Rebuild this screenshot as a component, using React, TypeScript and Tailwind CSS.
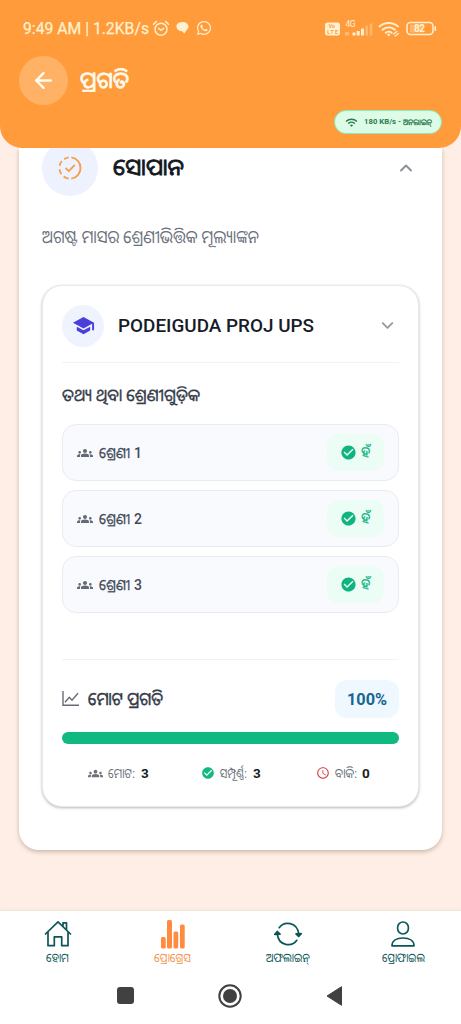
import React from 'react';
import { MdGroups, MdSchool, MdCheckCircle, MdSchedule, MdWifi } from 'react-icons/md';
import { FaWhatsapp } from 'react-icons/fa';
import { ArrowLeft, ChevronDown, ChevronUp } from 'lucide-react';

function Fit({ w, size, children, className = '' }: { w: number; size: number; children: string; className?: string }) {
  return (
    <svg width={w} height={size * 2} className={`shrink-0 overflow-visible ${className}`} fill="currentColor">
      <text x="0" y={size * 1.34} fontSize={size} textLength={w} lengthAdjust="spacingAndGlyphs">
        {children}
      </text>
    </svg>
  );
}

function AlarmIcon() {
  return (
    <svg width="18" height="17" viewBox="0 0 18 17" fill="none" stroke="currentColor" strokeWidth="1.5" strokeLinecap="round">
      <circle cx="9" cy="9.3" r="6" />
      <path d="M6.5 8.3 9 10.3l2.7-2M1.5 4.2 4.3 1.6M16.5 4.2l-2.8-2.6" />
    </svg>
  );
}

function StatusBar() {
  return (
    <div className="flex h-[18px] items-center pl-[23px] pr-[20px] text-[#fff1cf]">
      <Fit w={126} size={16} className="mt-[2px] stroke-current stroke-[.25]">9:49 AM | 1.2KB/s</Fit>
      <span className="ml-[3px]"><AlarmIcon /></span>
      <svg className="ml-[6px]" width="13" height="12" viewBox="0 0 13 12" fill="currentColor">
        <path d="M3 .8C5-.2 9-.2 11 1.500c2 1.700 2 4.500 0 6L8.300 11.500 6 9.200C3 9.500.5 7 .5 4.500.3 2.500 1.500 1.300 3 .8Z" />
      </svg>
      <FaWhatsapp className="ml-[7px] size-[16px]" />
      <svg className="-mt-[1px] ml-auto" width="116" height="22" viewBox="0 0 116 22" fill="currentColor">
        <rect x="0" y="5.500" width="15" height="13" rx="2.500" />
        <text x="3.800" y="11.200" fontSize="5" fontWeight="700" fill="#ff9a3c">Vo</text>
        <text x="2.200" y="17" fontSize="5" fontWeight="700" fill="#ff9a3c" textLength="10.500">LTE</text>
        <text x="20.500" y="9.500" fontSize="8.500" textLength="10">4G</text>
        <rect x="20" y="15" width="4" height="3.500" opacity=".35" />
        <rect x="27.500" y="15.500" width="3" height="3" rx=".6" />
        <rect x="31.700" y="14" width="3" height="4.500" rx=".6" />
        <rect x="36" y="11.500" width="3" height="7" rx=".6" />
        <rect x="40.500" y="8.500" width="2.500" height="10" opacity=".35" />
        <rect x="44.800" y="6.500" width="2.500" height="12" opacity=".35" />
        <g fill="none" stroke="currentColor" strokeWidth="1.900" strokeLinecap="round">
          <path d="M54.500 9.500c5.500-4.700 13-4.700 18.500 0M57.500 12.800c3.700-3 8.700-3 12.400 0M60.700 15.800c2-1.500 4.200-1.500 6 0" />
          <path d="m68.500 17 3.500-2.500m-2 4.500 3.500-2.500" strokeWidth="1.200" />
        </g>
        <circle cx="63.700" cy="17.800" r="1.400" />
        <rect x="82" y="5.500" width="26" height="12" rx="3.500" fill="none" stroke="currentColor" strokeWidth="1.500" />
        <rect x="85" y="7.500" width="13" height="8" opacity=".3" />
        <rect x="109.500" y="9" width="1.600" height="5" rx=".8" />
        <text x="89" y="15.200" fontSize="10" fontWeight="700" textLength="11">82</text>
      </svg>
    </div>
  );
}

function LineChartIcon() {
  return (
    <svg width="17" height="16" viewBox="0 0 17 16" fill="none" stroke="#666c76" strokeWidth="1.400">
      <path d="M1 0v14.300h16M3 11.300l4.300-5 2.700 3 6-7" />
    </svg>
  );
}

function ProgressCheck() {
  return (
    <svg width="26" height="26" viewBox="0 0 26 26" fill="none" stroke="#f5a04c" strokeWidth="1.900">
      <path d="M14.300 2.400a10.700 10.700 0 0 1 0 21.200" />
      <path d="M11.700 2.400a10.700 10.700 0 0 0-4.600 1.700M4.900 6A10.700 10.700 0 0 0 2.600 10.700M2.500 14.300a10.700 10.700 0 0 0 2 5M6.600 21.400a10.700 10.700 0 0 0 5.100 2.200" />
      <path d="m8.500 12.800 3.300 3.300 6-6.300" />
    </svg>
  );
}

function ClassRow({ n }: { n: number }) {
  return (
    <div className="flex h-[57px] items-center rounded-[14px] border-[1.500px] border-[#e8ebf0] bg-[#f8fafd] pl-[14px] pr-[14px]">
      <MdGroups className="size-[16px] text-[#646a75]" />
      <Fit w={31} size={15} className="ml-[6px] stroke-current stroke-[.3] text-[#434a57]">ଶ୍ରେଣୀ</Fit>
      <span className="ml-[4px] mt-[1px] text-[14px] font-medium leading-none text-[#434a57]">{n}</span>
      <div className="ml-auto flex h-[37px] w-[57px] items-center rounded-xl bg-[#ecfdf5] pl-[13px] text-[#10b47f]">
        <MdCheckCircle className="size-[17px]" />
        <Fit w={9} size={14.5} className="ml-[4px] stroke-current stroke-[.3]">ହଁ</Fit>
      </div>
    </div>
  );
}

function Home() {
  return (
    <svg width="28" height="28" viewBox="0 0 28 28" fill="none" stroke="currentColor" strokeWidth="1.700" strokeLinejoin="round" strokeLinecap="round">
      <path d="M1.500 14 14 1.800 26.500 14M4 12v13.700h6.300v-8.800h7.400v8.800H24V12M19 6.200V2.800h3.500v6.800" />
    </svg>
  );
}
function Bars() {
  return (
    <svg width="26" height="29" viewBox="0 0 26 29" fill="#ff8c3e">
      <rect x="1" y="17" width="4.700" height="11.500" rx="1.500" />
      <rect x="7" y="0" width="5" height="28.500" rx="1.500" />
      <rect x="13.500" y="11.500" width="4.700" height="17" rx="1.500" />
      <rect x="20" y="4.500" width="4.700" height="24" rx="1.500" />
    </svg>
  );
}
function Sync() {
  return (
    <svg width="28" height="24" viewBox="0 0 28 24" fill="none" stroke="currentColor" strokeWidth="1.700" strokeLinecap="round" strokeLinejoin="round">
      <path d="M5.200 5.700C10-1.200 23.500-.3 24.700 12.200M22.800 18.300C18 25.200 4.500 24.300 3.300 11.800" />
      <path d="m22 11.800 2.700 2.700 2.500-2.800Z M.800 12.300l2.500-2.800 2.700 2.700Z" fill="currentColor" />
    </svg>
  );
}
function Person() {
  return (
    <svg width="24" height="26" viewBox="0 0 24 26" fill="none" stroke="currentColor" strokeWidth="1.700" strokeLinejoin="round">
      <rect x="6.600" y="1" width="10.800" height="12" rx="5.400" />
      <path d="M1 24.800c0-4.700 4-7.800 11-7.800s11 3.100 11 7.800Z" />
    </svg>
  );
}

const tabs = [
  { label: 'ହୋମ', w: 23, icon: <Home />, color: 'text-[#0c5657]' },
  { label: 'ପ୍ରୋଗ୍ରେସ', w: 37, icon: <Bars />, color: 'text-[#f3934f]' },
  { label: 'ଅଫଲାଇନ୍', w: 44, icon: <Sync />, color: 'text-[#0c5657]' },
  { label: 'ପ୍ରୋଫାଇଲ', w: 43, icon: <Person />, color: 'text-[#0c5657]' },
];

export default function App() {
  return (
    <div className="flex h-[1024px] w-[461px] flex-col overflow-hidden bg-[#feeee5] font-[Roboto,'Noto_Sans_Oriya','Noto_Sans',sans-serif]">
      <header className="z-10 flex h-[148px] shrink-0 flex-col rounded-b-[22px] bg-[#ff9b3b] pt-[19px]">
        <StatusBar />
        <div className="mt-[19px] flex h-[49px] items-center pl-[19px] text-[#fffbed]">
          <div className="flex size-[49px] items-center justify-center rounded-full bg-[#ffb266]">
            <ArrowLeft className="size-[25px]" strokeWidth={2.3} />
          </div>
          <Fit w={49} size={23} className="-mt-[2px] ml-[12px] stroke-current stroke-[.8]">ପ୍ରଗତି</Fit>
        </div>
        <div className="mr-[19px] mt-[5px] flex h-[24px] w-[108px] items-center self-end rounded-full border border-[#8eeab1] bg-[#ddfce8] pl-[10px] text-[#2d7b4e]">
          <MdWifi className="size-[13px]" />
          <Fit w={37} size={7} className="ml-[6px] font-bold">180 KB/s -</Fit>
          <Fit w={29} size={8} className="ml-[2px] stroke-current stroke-[.3]">ଅନଲାଇନ୍</Fit>
        </div>
      </header>

      <main className="flex h-[763px] shrink-0 flex-col px-[19px]">
        <section className="flex h-[702px] flex-col rounded-b-[20px] bg-white px-[23px] shadow-[0_2px_4px_rgba(80,45,20,0.28)]">
          <div className="-mt-[8px] flex h-[56px] items-center">
            <div className="flex size-[56px] items-center justify-center rounded-full bg-[#eef1fe]"><ProgressCheck /></div>
            <Fit w={71} size={23} className="-mt-[2px] ml-[15px] stroke-current stroke-[.8] text-[#121722]">ସୋପାନ</Fit>
            <ChevronUp className="ml-auto mr-[3px] size-[20px] text-[#8c9098]" strokeWidth={2.4} />
          </div>
          <div className="mt-[24px] flex h-[34px] items-center text-[#6a707c]">
            <Fit w={217} size={18}>ଅଗଷ୍ଟ ମାସର ଶ୍ରେଣୀଭିତ୍ତିକ ମୂଲ୍ୟାଙ୍କନ</Fit>
          </div>
          <div className="mt-[31px] flex h-[522px] flex-col rounded-[20px] border-[1.500px] border-[#e8e9ec] bg-white px-[19px] shadow-[0_1px_3px_rgba(0,0,0,0.28)]">
            <div className="flex h-[77px] shrink-0 items-center border-b border-[#f1f2f4] pt-[3px]">
              <div className="flex size-[42px] items-center justify-center rounded-full bg-[#eff3fe]"><MdSchool className="size-[23px] text-[#4b3fdc]" /></div>
              <Fit w={196} size={18} className="ml-[14px] font-medium text-[#171c28]">PODEIGUDA PROJ UPS</Fit>
              <ChevronDown className="ml-auto mr-[2px] size-[19px] text-[#989ca4]" strokeWidth={2.5} />
            </div>
            <div className="mt-[15px] flex h-[34px] shrink-0 items-center text-[#343b48]">
              <Fit w={138} size={17} className="stroke-current stroke-[.4]">ତଥ୍ୟ ଥିବା ଶ୍ରେଣୀଗୁଡ଼ିକ</Fit>
            </div>
            <div className="mt-[12px] flex flex-col gap-[9px]">
              <ClassRow n={1} />
              <ClassRow n={2} />
              <ClassRow n={3} />
            </div>
            <div className="mt-[46px] flex h-[79px] shrink-0 items-center border-t border-[#f1f2f4]">
              <LineChartIcon />
              <Fit w={75} size={18} className="ml-[9px] stroke-current stroke-[.5] text-[#343b48]">ମୋଟ ପ୍ରଗତି</Fit>
              <div className="ml-auto flex h-[38px] w-[64px] items-center justify-center rounded-xl bg-[#eff8fe] text-[#176692]">
                <Fit w={40} size={17} className="font-bold">100%</Fit>
              </div>
            </div>
            <div className="-mt-[6px] h-[12px] shrink-0 rounded-full bg-[#10b982]" />
            <div className="mt-[12px] flex h-[34px] items-center text-[13.500px] text-[#6b707a]">
              <div className="ml-[26px] flex w-[113px] items-center">
                <MdGroups className="size-[15px]" />
                <Fit w={27} size={13.5} className="ml-[5px]">ମୋଟ:</Fit>
                <b className="ml-[6px] text-[#181c23]">3</b>
              </div>
              <div className="flex w-[115px] items-center">
                <MdCheckCircle className="size-[14px] text-[#10b982]" />
                <Fit w={27} size={13.5} className="ml-[5px]">ସମ୍ପୂର୍ଣ୍ଣ:</Fit>
                <b className="ml-[6px] text-[#181c23]">3</b>
              </div>
              <div className="flex items-center">
                <MdSchedule className="size-[14px] text-[#d6454f]" />
                <Fit w={22} size={13.5} className="ml-[5px]">ବାକି:</Fit>
                <b className="ml-[5px] text-[#181c23]">0</b>
              </div>
            </div>
          </div>
        </section>
      </main>

      <footer className="flex h-[113px] shrink-0 flex-col bg-white shadow-[0_-1px_2px_rgba(0,0,0,0.06)]">
        <nav className="grid h-[56px] grid-cols-4">
          {tabs.map((t) => (
            <div key={t.label} className={`flex flex-col items-center pt-[7px] ${t.color}`}>
              <div className="flex h-[32px] shrink-0 items-center">{t.icon}</div>
              <Fit w={t.w} size={12.5} className="-mt-[5px]">{t.label}</Fit>
            </div>
          ))}
        </nav>
        <div className="flex h-[58px] items-center text-[#414141]">
          <div className="ml-[117px] size-[17px] rounded-[3px] bg-current" />
          <svg className="ml-[84px]" width="24" height="24" viewBox="0 0 24 24"><circle cx="12" cy="12" r="10.700" fill="none" stroke="currentColor" strokeWidth="2" /><circle cx="12" cy="12" r="7" fill="currentColor" /></svg>
          <svg className="ml-[84px]" width="17" height="20" viewBox="0 0 17 20" fill="currentColor"><path d="M15.500.7v18.600L1 10Z" stroke="currentColor" strokeLinejoin="round" /></svg>
        </div>
      </footer>
    </div>
  );
}
